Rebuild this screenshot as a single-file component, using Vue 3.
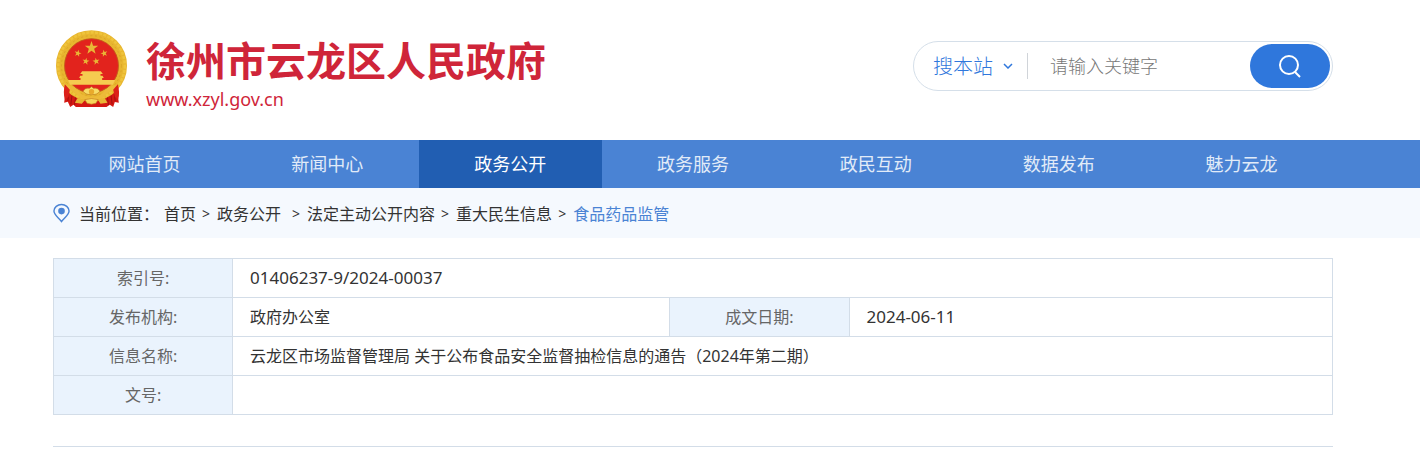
<script setup>
import { ref } from 'vue'

const keyword = ref('')
const scope = ref('site')
const active = ref(2)

const navList = ['网站首页', '新闻中心', '政务公开', '政务服务', '政民互动', '数据发布', '魅力云龙']
const crumbs = ['首页', '政务公开', '法定主动公开内容', '重大民生信息', '食品药品监管']

// five-pointed star, r is the outer radius
function star(cx, cy, r, turn = 0) {
    let arr = []
    for(let i = 0; i < 10; i++) {
        let len = i % 2 ? r * 0.4 : r
        let a = (i * 36 - 90 + turn) * Math.PI / 180
        arr.push((cx + len * Math.cos(a)).toFixed(1) + ',' + (cy + len * Math.sin(a)).toFixed(1))
    }
    return arr.join(' ')
}

const stars = [
    star(141, 81, 21),
    star(100, 97, 11, 15),
    star(179, 97, 11, -15),
    star(124, 121, 11, 10),
    star(155, 121, 11, -10)
]
</script>

<template>
    <div class="page">
        <header class="header">
            <div class="wrap header-inner">
                <a class="logo" href="#">
                    <svg class="emblem" viewBox="33 27 216 234" aria-hidden="true">
                        <path d="M66 190 L59 245 L70 242 L77 258 L87 251 L94 258 H186 L196 251 L206 258 L211 243 L223 245 L215 190 Z" fill="#d41813" />
                        <path d="M74 202 L70 240 M84 212 L79 250 M94 222 L90 252 M208 202 L212 240 M198 212 L203 250 M188 222 L192 252" stroke="#a50f0f" stroke-width="3" fill="none" />
                        <circle cx="141" cy="134" r="94" fill="#e2231d" stroke="#e8b62f" stroke-width="25" />
                        <circle cx="141" cy="134" r="100" fill="none" stroke="#efc43c" stroke-width="8" stroke-dasharray="9 4" />
                        <circle cx="141" cy="134" r="90" fill="none" stroke="#dba527" stroke-width="3" stroke-dasharray="6 8" />
                        <circle cx="141" cy="134" r="81" fill="#e2231d" stroke="#b9781c" stroke-width="2" />
                        <polygon v-for="(item, index) in stars" :key="index" :points="item" fill="#e9b636" />
                        <path d="M113 151 H169 L175 159 H107 Z M114 159 H168 V165 H114 Z M107 164 H174 L178 171 H104 Z" fill="#f5cb50" />
                        <path d="M108 170 H173 V177 H212 L205 191 H77 L70 177 H108 Z" fill="#f5cb50" />
                        <path d="M62 193 Q92 193 109 218 Q128 230 141 226 Q154 230 173 218 Q190 193 219 193 L215 207 Q190 208 178 229 Q156 243 141 236 Q126 243 104 229 Q92 208 66 207 Z" fill="#edba39" />
                        <path d="M61 190 Q55 216 61 235 L72 228 L76 206 Z M220 190 Q227 216 221 235 L211 228 L206 206 Z" fill="#dc211a" />
                        <path d="M116 211 Q122 199 135 202 L141 197 L147 202 Q160 199 166 211 Q157 223 141 220 Q125 223 116 211 Z" fill="#f8dc66" stroke="#bd7a1c" stroke-width="2" />
                        <circle cx="141" cy="212" r="8" fill="#e9aa2b" />
                        <path d="M122 236 L99 232 L91 245 L112 248 Z M160 236 L181 232 L189 245 L168 248 Z" fill="#e9b435" />
                        <path d="M121 236 Q141 229 161 236 L154 247 Q141 252 128 247 Z" fill="#f7d55a" stroke="#c27c1c" stroke-width="2" />
                    </svg>
                    <span class="logo-text">
                        <strong>徐州市云龙区人民政府</strong>
                        <span>www.xzyl.gov.cn</span>
                    </span>
                </a>
                <form class="search" @submit.prevent>
                    <label class="scope">
                        <select v-model="scope" aria-label="搜索范围">
                            <option value="site">搜本站</option>
                        </select>
                        <svg viewBox="0 0 10 6" aria-hidden="true"><path d="M1 1 L5 5 L9 1" /></svg>
                    </label>
                    <input v-model="keyword" type="text" placeholder="请输入关键字" aria-label="请输入关键字">
                    <button type="submit" aria-label="搜索">
                        <svg viewBox="0 0 24 24" aria-hidden="true">
                            <circle cx="11" cy="11" r="9" />
                            <path d="M17 18 L22 23" />
                        </svg>
                    </button>
                </form>
            </div>
        </header>

        <nav class="nav">
            <div class="wrap nav-inner">
                <a
                    v-for="(item, index) in navList"
                    :key="item"
                    href="#"
                    :class="{ on: index == active }"
                    @click.prevent="active = index"
                    >{{item}}</a>
            </div>
        </nav>

        <div class="position">
            <div class="wrap position-inner">
                <svg class="pin" viewBox="0 0 18 20" aria-hidden="true">
                    <path d="M9 19 C6 15 1 12 1 8 C1 4 4.800 1 9 1 C13.200 1 17 4 17 8 C17 12 12 15 9 19 Z" />
                    <circle cx="9" cy="8" r="3.500" />
                </svg>
                <span class="position-label">当前位置：</span>
                <template v-for="(item, index) in crumbs" :key="item">
                    <i v-if="index" :class="{ wide: index == 2 }">&gt;</i>
                    <a href="#" :class="{ current: index == crumbs.length - 1 }">{{item}}</a>
                </template>
            </div>
        </div>

        <main class="wrap">
            <div class="detail">
                <table>
                    <colgroup>
                        <col class="col-name">
                        <col class="col-value">
                        <col class="col-name">
                        <col>
                    </colgroup>
                    <tbody>
                        <tr>
                            <th scope="row">索引号:</th>
                            <td colspan="3" class="num">01406237-9/2024-00037</td>
                        </tr>
                        <tr>
                            <th scope="row">发布机构:</th>
                            <td>政府办公室</td>
                            <th scope="row">成文日期:</th>
                            <td class="num">2024-06-11</td>
                        </tr>
                        <tr>
                            <th scope="row">信息名称:</th>
                            <td colspan="3">云龙区市场监督管理局 关于公布食品安全监督抽检信息的通告（2024年第二期）</td>
                        </tr>
                        <tr>
                            <th scope="row">文号:</th>
                            <td colspan="3"></td>
                        </tr>
                    </tbody>
                </table>
            </div>
        </main>
    </div>
</template>

<style>
body {
    background: #fff;
}
</style>

<style scoped>
.page {
    font-family: "Noto Sans", "Noto Sans CJK SC", sans-serif;
    font-size: 16px;
    color: #333;
}
.page a {
    text-decoration: none;
    color: inherit;
}
.wrap {
    box-sizing: border-box;
    max-width: 1420px;
    margin: 0 auto;
    padding: 0 87px 0 53px;
}
.header-inner {
    display: flex;
    justify-content: space-between;
    align-items: flex-start;
    height: 140px;
}
.logo {
    display: flex;
    padding: 30px 0 0 2px;
}
.emblem {
    width: 73px;
    height: 78px;
    margin-right: 18px;
}
.logo .logo-text {
    display: flex;
    flex-direction: column;
    padding-top: 6px;
    color: #cf2539;
    font-size: 18px;
    line-height: 26px;
    white-space: nowrap;
}
.logo-text strong {
    font-size: 40px;
    font-weight: 700;
    line-height: 50px;
}
.search {
    box-sizing: border-box;
    display: flex;
    align-items: center;
    width: 420px;
    height: 50px;
    margin-top: 41px;
    padding: 0 2px 0 19px;
    border: 1px solid #d5dfe9;
    border-radius: 25px;
    font-weight: 300;
}
.scope {
    display: flex;
    align-items: center;
    flex: none;
    height: 26px;
    padding-right: 14px;
    border-right: 1px solid #d0d4d9;
}
.scope select {
    appearance: none;
    width: 62px;
    padding: 0;
    border: 0;
    background: none;
    color: #2f77dc;
    font: inherit;
    font-size: 20px;
    cursor: pointer;
}
.scope svg {
    width: 10px;
    height: 6px;
    margin-left: 8px;
    fill: none;
    stroke: #2f77dc;
    stroke-width: 1.5;
}
.search input {
    flex: 1;
    min-width: 0;
    padding: 0 22px;
    border: 0;
    outline: none;
    background: none;
    font: inherit;
    font-size: 18px;
}
.search input::placeholder {
    color: #777;
}
.search button {
    display: flex;
    align-items: center;
    justify-content: center;
    flex: none;
    width: 80px;
    height: 44px;
    padding: 0;
    border: 0;
    border-radius: 22px;
    background: #2f77dc;
    cursor: pointer;
}
.search button svg {
    width: 24px;
    height: 24px;
    fill: none;
    stroke: #fff;
    stroke-width: 2;
}
.nav {
    background: #4a83d4;
}
.nav-inner {
    display: flex;
}
.nav a {
    flex: 1;
    color: #e1ebf8;
    font-size: 18px;
    line-height: 48px;
    text-align: center;
    white-space: nowrap;
}
.nav a.on {
    background: #215eb2;
    color: #fff;
}
.position {
    background: #f5f9fe;
}
.position-inner {
    display: flex;
    align-items: center;
    height: 50px;
    white-space: nowrap;
}
.pin {
    width: 17px;
    height: 20px;
    margin-right: 9px;
}
.pin path {
    fill: none;
    stroke: #4a83d4;
    stroke-width: 1.5;
}
.pin circle {
    fill: #4a83d4;
}
.position-label {
    margin-right: 5px;
}
.position i {
    margin: 0 7px 0 6px;
    font-size: 14px;
    font-style: normal;
}
.position i.wide {
    margin-left: 11px;
}
.page .position a.current {
    color: #4a83d4;
}
.detail {
    padding: 20px 0 31px;
    border-bottom: 1px solid #d3dde8;
}
table {
    width: 100%;
    table-layout: fixed;
    border-collapse: collapse;
}
.col-name {
    width: 14%;
}
.col-value {
    width: 34.2%;
}
th, td {
    height: 38px;
    border: 1px solid #d3dde8;
    line-height: 24px;
}
th {
    padding: 0;
    background: #eaf3fd;
    color: #666;
    font-weight: inherit;
    text-align: center;
}
td {
    padding: 0 17px;
    text-align: left;
}
td.num {
    font-size: 17px;
}
</style>
